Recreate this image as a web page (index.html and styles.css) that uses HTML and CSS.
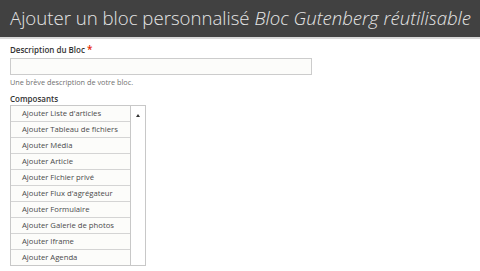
FILE: index.html
```html
<!DOCTYPE html>
<html lang="fr">
<head>
<meta charset="utf-8">
<link rel="stylesheet" href="styles.css">
</head>
<body>
<header class="page-header">
  <h1 class="title">Ajouter un bloc personnalisé <em>Bloc Gutenberg réutilisable</em></h1>
</header>
<main class="content">
  <div class="field">
    <label class="label">Description du Bloc <span class="req">*</span></label>
    <div class="input"></div>
    <div class="help">Une brève description de votre bloc.</div>
  </div>
  <div class="field">
    <div class="label label-tight">Composants</div>
    <div class="picker">
      <ul class="items">
        <li>Ajouter Liste d'articles</li>
        <li>Ajouter Tableau de fichiers</li>
        <li>Ajouter Média</li>
        <li>Ajouter Article</li>
        <li>Ajouter Fichier privé</li>
        <li>Ajouter Flux d'agrégateur</li>
        <li>Ajouter Formulaire</li>
        <li>Ajouter Galerie de photos</li>
        <li>Ajouter Iframe</li>
        <li>Ajouter Agenda</li>
      </ul>
      <div class="scroll"><span class="arrow"></span></div>
    </div>
  </div>
</main>
</body>
</html>
```
FILE: styles.css
```css
html, body { margin: 0; padding: 0; }
body {
  background: #fff;
  font-family: "Open Sans", "DejaVu Sans", sans-serif;
  color: #333;
  width: 480px;
  height: 271px;
  overflow: hidden;
}
.page-header {
  background: #414141;
  height: 37px;
  border-bottom: 2px solid #d8d8d8;
  box-sizing: content-box;
  display: flex;
  align-items: center;
  padding: 0 10px;
}
.title {
  margin: 0;
  font-weight: 300;
  font-size: 18.6px;
  color: #e6e6e6;
  white-space: nowrap;
  line-height: 1;
}
.title em { font-style: italic; }
.content { padding: 5px 10px 0; }
.field { display: flex; flex-direction: column; }
.label {
  font-size: 8px;
  font-weight: 600;
  color: #333;
  line-height: 12px;
  height: 12px;
  margin-bottom: 2px;
}
.label-tight { margin-bottom: 0; }
.req { color: #e62600; font-size: 10px; vertical-align: top; line-height: 10px; }
.input {
  width: 300px;
  height: 15px;
  border: 1px solid #ccc;
  background: #fcfcfa;
}
.help {
  font-size: 7.3px;
  color: #707070;
  margin-top: 2px;
  line-height: 10px;
  margin-bottom: 6px;
}
.picker {
  display: flex;
  width: 134px;
  border: 1px solid #c8c8c8;
  background: #fff;
}
.items {
  list-style: none;
  margin: 0;
  padding: 0;
  width: 119px;
  border-right: 1px solid #c8c8c8;
}
.items li {
  height: 15px;
  border-bottom: 1px solid #d4d4d4;
  font-size: 7.7px;
  line-height: 15px;
  padding-left: 11px;
  color: #4a4a4a;
  background: #fcfcfa;
  white-space: nowrap;
}
.items li:last-child { border-bottom: none; }
.scroll {
  flex: 1;
  display: flex;
  justify-content: center;
  padding-top: 8px;
}
.arrow {
  width: 0; height: 0;
  border-left: 2.5px solid transparent;
  border-right: 2.5px solid transparent;
  border-bottom: 3px solid #333;
}
```
